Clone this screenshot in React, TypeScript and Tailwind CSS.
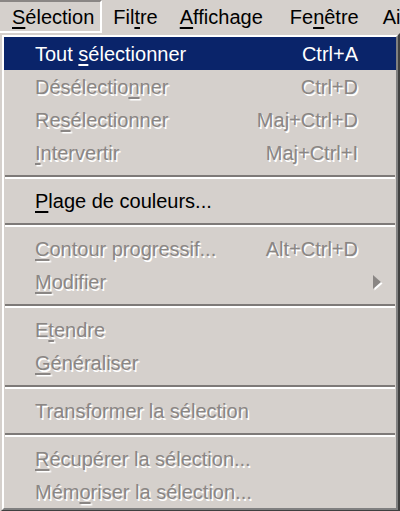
import React from 'react';

type Item =
  | { kind: 'sep' }
  | {
      kind: 'item';
      pre: string;
      key: string;
      post: string;
      shortcut?: string;
      disabled?: boolean;
      active?: boolean;
      submenu?: boolean;
    };

const items: Item[] = [
  { kind: 'item', pre: 'Tout ', key: 's', post: 'électionner', shortcut: 'Ctrl+A', active: true },
  { kind: 'item', pre: 'Désélectio', key: 'n', post: 'ner', shortcut: 'Ctrl+D', disabled: true },
  { kind: 'item', pre: 'Re', key: 's', post: 'électionner', shortcut: 'Maj+Ctrl+D', disabled: true },
  { kind: 'item', pre: '', key: 'I', post: 'ntervertir', shortcut: 'Maj+Ctrl+I', disabled: true },
  { kind: 'sep' },
  { kind: 'item', pre: '', key: 'P', post: 'lage de couleurs...' },
  { kind: 'sep' },
  { kind: 'item', pre: '', key: 'C', post: 'ontour progressif...', shortcut: 'Alt+Ctrl+D', disabled: true },
  { kind: 'item', pre: '', key: 'M', post: 'odifier', disabled: true, submenu: true },
  { kind: 'sep' },
  { kind: 'item', pre: 'E', key: 't', post: 'endre', disabled: true },
  { kind: 'item', pre: '', key: 'G', post: 'énéraliser', disabled: true },
  { kind: 'sep' },
  { kind: 'item', pre: 'Transformer la sélection', key: '', post: '', disabled: true },
  { kind: 'sep' },
  { kind: 'item', pre: '', key: 'R', post: 'écupérer la sélection...', disabled: true },
  { kind: 'item', pre: 'Mém', key: 'o', post: 'riser la sélection...', disabled: true },
];

// padding per menu bar entry, tuned to where the reference puts the labels
const bar = [
  { pre: '', key: 'S', post: 'élection', cls: 'pl-3 pr-[6px] border-t-2 border-r-2 border-b-2 border-t-[#8a8684] border-r-white border-b-white' },
  { pre: 'Fil', key: 't', post: 're', cls: 'px-[11px]' },
  { pre: '', key: 'A', post: 'ffichage', cls: 'pl-[11px] pr-[16px]' },
  { pre: 'Fe', key: 'n', post: 'être', cls: 'pl-[11px] pr-[13px]' },
  { pre: 'Ai', key: '', post: 'de', cls: 'pl-[11px]' },
];

const Mnemonic = ({ pre, k, post }: { pre: string; k: string; post: string }) => (
  <span>
    {pre}
    {k && <u className="decoration-2 underline-offset-[3px]">{k}</u>}
    {post}
  </span>
);

export default function App() {
  return (
    <div
      className="w-[400px] h-[511px] overflow-hidden bg-[#d5d0cc] text-[20px] leading-none text-black"
      style={{ fontFamily: '"Liberation Sans", Arial, sans-serif' }}
    >
      {/* menu bar */}
      <div className="flex h-[33px] whitespace-nowrap">
        {bar.map((b) => (
          <div key={b.pre + b.key + b.post} className={'flex items-center ' + b.cls}>
            <Mnemonic pre={b.pre} k={b.key} post={b.post} />
          </div>
        ))}
      </div>

      {/* dropdown */}
      <div className="border-2 border-t-[#d5d0cc] border-l-[#d5d0cc] border-r-[#404040] border-b-[#404040]">
        <div className="border-2 border-t-white border-l-white border-r-[#808080] border-b-[#808080]">
          {items.map((it, i) =>
            it.kind === 'sep' ? (
              <div key={i} className="h-[15px] flex flex-col justify-center px-px">
                <div className="h-[2px] bg-[#7e7a78]" />
                <div className="h-[2px] bg-white" />
              </div>
            ) : (
              <div
                key={i}
                className={
                  'h-[33px] flex items-center pl-[31px] pr-[38px] whitespace-nowrap ' +
                  (it.active ? 'bg-[#0a246a] text-white' : '') +
                  (it.disabled ? ' text-[#8a8684] [text-shadow:1.5px_1.5px_0_#ffffff]' : '')
                }
              >
                <span className="flex-1">
                  <Mnemonic pre={it.pre} k={it.key} post={it.post} />
                </span>
                {it.shortcut && <span>{it.shortcut}</span>}
                {it.submenu && (
                  <svg width="14" height="18" viewBox="0 0 14 18" className="-mr-[26px]">
                    <polygon points="3,2 11,9 3,16" fill="#ffffff" transform="translate(1.5,1.5)" />
                    <polygon points="3,2 11,9 3,16" fill="#8a8684" />
                  </svg>
                )}
              </div>
            )
          )}
        </div>
      </div>
    </div>
  );
}
